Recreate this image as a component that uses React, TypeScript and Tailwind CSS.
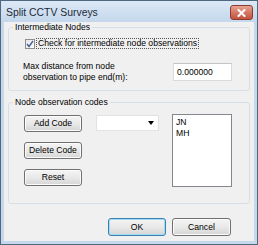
import React from "react";

const Btn = ({ label, focused = false, className = "" }: { label: string; focused?: boolean; className?: string }) => (
  <button
    className={`flex items-center justify-center rounded-[3px] border bg-gradient-to-b from-[#f4f4f4] via-[#e9e9e9] to-[#d5d5d5] text-[8.6px] leading-none text-black ${
      focused
        ? "border-[#3c7fb1] shadow-[inset_0_0_0_1px_#9fdcf6]"
        : "border-[#707070] shadow-[inset_0_0_0_1px_#fbfbfb]"
    } ${className}`}
  >
    {label}
  </button>
);

const App = () => {
  return (
    <div className="w-[258px] h-[245px] flex flex-col border border-[#50687f] bg-[#c6d8ec] font-['Liberation_Sans',sans-serif] text-[8.6px] text-black">
      {/* title bar */}
      <div className="h-[21px] flex items-start justify-between pl-[5px] pr-[4px] bg-gradient-to-b from-[#dce8f6] to-[#c4d7ec]">
        <span className="mt-[5px] text-[10.4px] leading-[13px] text-[#1c2a3a]">Split CCTV Surveys</span>
        <div className="mt-[4px] w-[23px] h-[15px] flex items-center justify-center rounded-[3px] border border-[#8b3d30] bg-gradient-to-b from-[#e8a493] via-[#d47865] to-[#c2523e]">
          <svg width="9" height="8" viewBox="0 0 9 8">
            <path d="M1.5 1 L7.5 7 M7.5 1 L1.5 7" stroke="#fff" strokeWidth="2" strokeLinecap="square" />
          </svg>
        </div>
      </div>

      {/* client area */}
      <div className="flex-1 mx-[3px] mb-[3px] bg-[#f0f0f0] px-[4px] flex flex-col">
        <fieldset className="h-[69px] border border-[#d5dfe5] rounded-[3px]">
          <legend className="ml-[4px] px-[2px] leading-[10px]">Intermediate Nodes</legend>
          <div className="mt-[6px] ml-[16px] flex items-center h-[11px]">
            <div className="w-[10px] h-[10px] border border-[#8e8f8f] bg-gradient-to-br from-[#e4e4e4] to-[#ffffff] flex items-center justify-center">
              <svg width="8" height="8" viewBox="0 0 8 8">
                <path d="M1 4 L3 6.5 L7 1" fill="none" stroke="#4a5f97" strokeWidth="1.4" />
              </svg>
            </div>
            <span className="ml-[1px] px-[1px] border border-dotted border-[#555] leading-[9px]">
              Check for intermediate node observations
            </span>
          </div>
          <div className="mt-[12px] flex items-center">
            <div className="ml-[14px] w-[140px] leading-[11px]">
              Max distance from node
              <br />
              observation to pipe end(m):
            </div>
            <div className="ml-[10px] w-[59px] h-[18px] bg-white border border-[#dadada] border-t-[#c4c4c4] flex items-center pl-[3px]">
              0.000000
            </div>
          </div>
        </fieldset>

        <fieldset className="mt-[6px] h-[107px] border border-[#d5dfe5] rounded-[3px]">
          <legend className="ml-[4px] px-[2px] leading-[10px]">Node observation codes</legend>
          <div className="flex mt-[7px]">
            <div className="ml-[15px] flex flex-col gap-[10px] pt-[1px]">
              <Btn label="Add Code" className="w-[58px] h-[17px]" />
              <Btn label="Delete Code" className="w-[58px] h-[17px]" />
              <Btn label="Reset" className="w-[58px] h-[17px]" />
            </div>
            <div className="ml-[14px] mt-[1px] w-[63px] h-[16px] bg-white border border-[#e2e2e2] flex items-center justify-end pr-[4px]">
              <svg width="6" height="4" viewBox="0 0 6 4">
                <path d="M0 0 H6 L3 4 Z" fill="#000" />
              </svg>
            </div>
            <div className="ml-[13px] w-[60px] h-[73px] bg-white border border-[#828790] pl-[3px] pt-[2px] leading-[11px]">
              <div>JN</div>
              <div>MH</div>
            </div>
          </div>
        </fieldset>

        <div className="mt-[14px] flex justify-end gap-[6px] pr-[19px]">
          <Btn label="OK" focused className="w-[58px] h-[18px]" />
          <Btn label="Cancel" className="w-[59px] h-[18px]" />
        </div>
      </div>
    </div>
  );
};

export default App;
